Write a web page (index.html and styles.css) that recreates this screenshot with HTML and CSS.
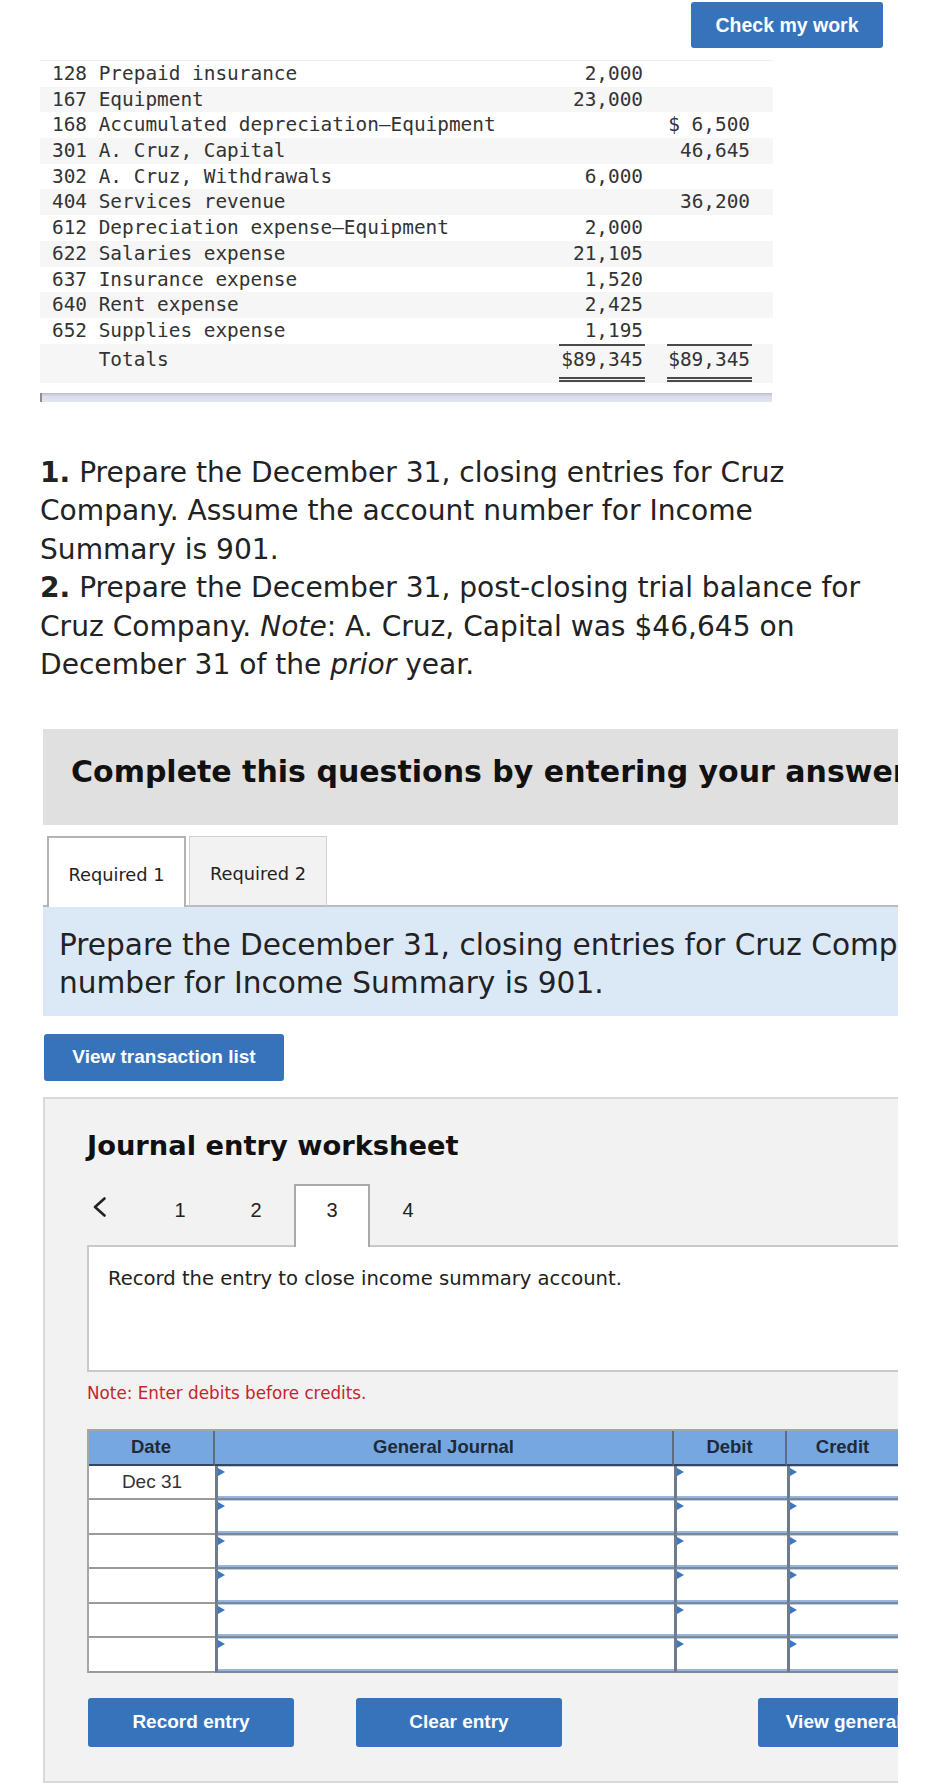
FILE: index.html
```html
<!DOCTYPE html>
<html lang="en">
<head>
<meta charset="utf-8">
<title>Closing entries</title>
<link rel="stylesheet" href="styles.css">
</head>
<body>
<div class="top-bar"><button class="btn btn-check">Check my work</button></div>

<div class="tb">
  <div class="tb-row"><span>128 Prepaid insurance</span><span class="amt">2,000</span><span class="amt"></span></div>
  <div class="tb-row"><span>167 Equipment</span><span class="amt">23,000</span><span class="amt"></span></div>
  <div class="tb-row"><span>168 Accumulated depreciation—Equipment</span><span class="amt"></span><span class="amt">$ 6,500</span></div>
  <div class="tb-row"><span>301 A. Cruz, Capital</span><span class="amt"></span><span class="amt">46,645</span></div>
  <div class="tb-row"><span>302 A. Cruz, Withdrawals</span><span class="amt">6,000</span><span class="amt"></span></div>
  <div class="tb-row"><span>404 Services revenue</span><span class="amt"></span><span class="amt">36,200</span></div>
  <div class="tb-row"><span>612 Depreciation expense—Equipment</span><span class="amt">2,000</span><span class="amt"></span></div>
  <div class="tb-row"><span>622 Salaries expense</span><span class="amt">21,105</span><span class="amt"></span></div>
  <div class="tb-row"><span>637 Insurance expense</span><span class="amt">1,520</span><span class="amt"></span></div>
  <div class="tb-row"><span>640 Rent expense</span><span class="amt">2,425</span><span class="amt"></span></div>
  <div class="tb-row"><span>652 Supplies expense</span><span class="amt under">1,195</span><span class="amt under"></span></div>
  <div class="tb-row tb-total"><span class="tot-label">Totals</span><span class="amt dbl">$89,345</span><span class="amt dbl">$89,345</span></div>
</div>
<div class="hscroll"></div>

<p class="question"><b>1.</b> Prepare the December 31, closing entries for Cruz<br>Company. Assume the account number for Income<br>Summary is 901.<br><b>2.</b> Prepare the December 31, post-closing trial balance for<br>Cruz Company. <i>Note</i>: A. Cruz, Capital was $46,645 on<br>December 31 of the <i>prior</i> year.</p>

<div class="panel">
  <div class="banner">Complete this questions by entering your answers in the tabs below.</div>
  <div class="tabs">
    <div class="tab active">Required 1</div>
    <div class="tab">Required 2</div>
  </div>
  <div class="instr">Prepare the December 31, closing entries for Cruz Company. Assume the account<br>number for Income Summary is 901.</div>
  <button class="btn btn-view">View transaction list</button>

  <div class="worksheet">
    <h2 class="ws-title">Journal entry worksheet</h2>
    <div class="pager">
      <div class="chev"><svg width="15" height="20" viewBox="0 0 15 20"><polyline points="12.5,1.5 3,10 12.5,18.5" fill="none" stroke="#222" stroke-width="2.6" stroke-linecap="round" stroke-linejoin="round"/></svg></div>
      <div class="pg">1</div>
      <div class="pg">2</div>
      <div class="pg active">3</div>
      <div class="pg">4</div>
    </div>
    <div class="prompt">Record the entry to close income summary account.</div>
    <p class="note">Note: Enter debits before credits.</p>

    <div class="jgrid">
      <div class="jh">Date</div><div class="jh">General Journal</div><div class="jh">Debit</div><div class="jh">Credit</div>
      <div class="jd">Dec 31</div><div class="ji"></div><div class="ji"></div><div class="ji"></div>
      <div class="jd"></div><div class="ji"></div><div class="ji"></div><div class="ji"></div>
      <div class="jd"></div><div class="ji"></div><div class="ji"></div><div class="ji"></div>
      <div class="jd"></div><div class="ji"></div><div class="ji"></div><div class="ji"></div>
      <div class="jd"></div><div class="ji"></div><div class="ji"></div><div class="ji"></div>
      <div class="jd"></div><div class="ji"></div><div class="ji"></div><div class="ji"></div>
    </div>

    <div class="btn-row">
      <button class="btn btn-rec">Record entry</button>
      <button class="btn btn-rec">Clear entry</button>
      <button class="btn btn-gen">View general journal</button>
    </div>
  </div>
</div>
</body>
</html>
```
FILE: styles.css
```css
* { box-sizing: border-box; }

body {
  margin: 0;
  background: #fff;
  color: #222;
  font-family: "DejaVu Sans", sans-serif;
}

.btn {
  display: block;
  border: none;
  border-radius: 3px;
  background: #3773bb;
  color: #fff;
  font-family: "Liberation Sans", Arial, sans-serif;
  font-weight: bold;
  font-size: 19px;
  padding: 0;
  text-align: center;
}

.top-bar {
  display: flex;
  justify-content: flex-end;
  padding: 2px 54px 0 0;
}

.btn-check {
  width: 192px;
  height: 46px;
  font-size: 19.5px;
}

/* trial balance */
.tb {
  margin: 12px 0 0 40px;
  width: 733px;
  border-top: 1px solid #efefef;
  font-family: "DejaVu Sans Mono", monospace;
  font-size: 19.4px;
  color: #333;
}

.tb-row {
  display: grid;
  grid-template-columns: 1fr 86px 85px;
  column-gap: 22px;
  padding: 0 21px 0 12px;
  height: 25.7px;
  line-height: 25.7px;
  white-space: pre;
}

.tb-row:nth-child(even) { background: #f6f6f6; }

.amt {
  text-align: right;
  padding-right: 2px;
}

.under { border-bottom: 2.5px solid #4a4a4a; }

.tb-total { height: 39.3px; align-items: start; }

.tot-label {
  padding-left: 4ch;
  margin-top: 3.8px;
}

.dbl {
  margin-top: 3.8px;
  padding-bottom: 4.4px;
  border-bottom: 5px double #4a4a4a;
  box-sizing: content-box;
}

.hscroll {
  margin: 10px 0 0 40px;
  width: 732px;
  height: 9px;
  border-left: 2px solid #8d8d8d;
  background: linear-gradient(#b9bdcb, #d9dce7 35%, #e3e6ef);
}

/* question */
.question {
  margin: 52px 0 0 40px;
  font-size: 28.1px;
  line-height: 38.5px;
  white-space: nowrap;
  color: #222;
}

/* panel */
.panel {
  margin: 44px 0 0 43px;
  width: 855px;
  overflow: hidden;
}

.banner {
  height: 96px;
  background: #e0e0e0;
  display: flex;
  align-items: center;
  padding: 0 0 10px 28px;
  font-weight: bold;
  font-size: 30px;
  white-space: nowrap;
  color: #111;
}

.tabs {
  display: flex;
  align-items: flex-end;
  gap: 3px;
  margin-top: 11px;
  padding-left: 4px;
  height: 71px;
  box-shadow: inset 0 -2px 0 #bcbcbc;
}

.tab {
  width: 138px;
  height: 71px;
  display: flex;
  align-items: center;
  justify-content: center;
  padding-top: 6px;
  background: #f2f2f2;
  border: 1.5px solid #d0d0d0;
  border-bottom: 2px solid #bcbcbc;
  font-size: 17.8px;
  color: #222;
}

.tab.active {
  width: 139px;
  background: #fff;
  border: 2px solid #b3b3b3;
  border-bottom: none;
  padding-top: 4px;
}

.instr {
  background: #dbe9f7;
  padding: 19px 0 14px 16px;
  font-size: 29.6px;
  line-height: 38px;
  white-space: nowrap;
  color: #222;
}

.btn-view {
  margin: 18px 0 0 1px;
  width: 240px;
  height: 47px;
}

/* worksheet */
.worksheet {
  margin-top: 16px;
  width: 1000px;
  background: #f2f2f2;
  border: 2px solid #d9d9d9;
  padding: 31px 0 34px 42px;
}

.ws-title {
  margin: 0;
  font-size: 27.3px;
  line-height: 32px;
  font-weight: bold;
  color: #111;
}

.pager {
  display: flex;
  align-items: flex-end;
  margin-top: 22px;
  height: 61px;
}

.chev {
  width: 55px;
  align-self: stretch;
  padding: 13px 0 0 5px;
}

.chev svg { display: block; }

.pg {
  width: 76px;
  height: 61px;
  padding-top: 14px;
  line-height: 24px;
  text-align: center;
  font-family: "Liberation Sans", Arial, sans-serif;
  font-size: 20px;
  color: #222;
}

.pg.active {
  position: relative;
  z-index: 1;
  height: 63px;
  margin-bottom: -2px;
  padding-top: 12px;
  background: #fff;
  border: 2px solid #a9a9a9;
  border-bottom: none;
}

.prompt {
  height: 127px;
  background: #fff;
  border: 2px solid #c9c9c9;
  padding: 20px 0 0 19px;
  font-size: 19.6px;
  line-height: 24px;
  color: #222;
}

.note {
  margin: 11px 0 0;
  font-size: 16.8px;
  line-height: 20px;
  color: #c8232c;
}

/* journal grid */
.jgrid {
  margin-top: 26px;
  display: grid;
  grid-template-columns: 126px 459px 113px 113px;
  grid-template-rows: 35px repeat(6, 34.5px);
  border-top: 2px solid #a5a5a5;
  border-left: 2px solid #a5a5a5;
  width: 813px;
  font-family: "Liberation Sans", Arial, sans-serif;
}

.jh {
  display: flex;
  align-items: center;
  justify-content: center;
  background: #76a7e1;
  border-bottom: 2px solid #34475e;
  border-right: 2px solid #5d6c7e;
  font-weight: bold;
  font-size: 18.5px;
  color: #1e2a38;
}

.jd {
  display: flex;
  align-items: center;
  justify-content: center;
  background: #fff;
  border-bottom: 2px solid #9a9a9a;
  font-size: 19px;
  color: #333;
}

.ji {
  position: relative;
  background: #fff;
  border-left: 3px solid #6e7b8c;
  border-bottom: 2px solid #7c8797;
  box-shadow: inset 0 -2px 0 #98b6dc, inset 0 1px 0 #b9cfea;
}

.ji::before {
  content: "";
  position: absolute;
  left: 0;
  top: 2px;
  border-left: 7px solid #3b78c4;
  border-top: 4.5px solid transparent;
  border-bottom: 4.5px solid transparent;
}

.btn-row {
  display: flex;
  margin-top: 25px;
  padding-left: 1px;
}

.btn-rec {
  width: 206px;
  height: 49px;
  margin-right: 62px;
}

.btn-gen {
  width: 240px;
  height: 49px;
  margin-left: 134px;
}
```
